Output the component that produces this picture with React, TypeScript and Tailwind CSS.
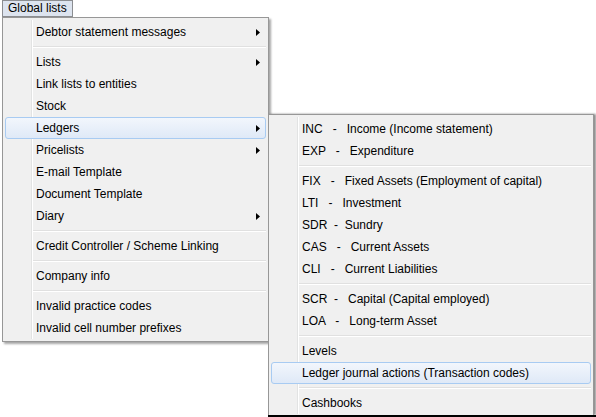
import React from "react";

type Entry = { label?: string; sub?: boolean; active?: boolean; sep?: boolean };

const mainItems: Entry[] = [
  { label: "Debtor statement messages", sub: true },
  { sep: true },
  { label: "Lists", sub: true },
  { label: "Link lists to entities" },
  { label: "Stock" },
  { label: "Ledgers", sub: true, active: true },
  { label: "Pricelists", sub: true },
  { label: "E-mail Template" },
  { label: "Document Template" },
  { label: "Diary", sub: true },
  { sep: true },
  { label: "Credit Controller / Scheme Linking" },
  { sep: true },
  { label: "Company info" },
  { sep: true },
  { label: "Invalid practice codes" },
  { label: "Invalid cell number prefixes" },
];

const ledgerItems: Entry[] = [
  { label: "INC   -   Income (Income statement)" },
  { label: "EXP   -   Expenditure" },
  { sep: true },
  { label: "FIX   -   Fixed Assets (Employment of capital)" },
  { label: "LTI   -   Investment" },
  { label: "SDR  -  Sundry" },
  { label: "CAS   -   Current Assets" },
  { label: "CLI   -   Current Liabilities" },
  { sep: true },
  { label: "SCR  -   Capital (Capital employed)" },
  { label: "LOA   -   Long-term Asset" },
  { sep: true },
  { label: "Levels" },
  { label: "Ledger journal actions (Transaction codes)", active: true },
  { sep: true },
  { label: "Cashbooks" },
];

function Arrow() {
  return (
    <svg width="4" height="7" viewBox="0 0 4 7" className="mr-[5px]">
      <polygon points="0,0 4,3.5 0,7" fill="#000" />
    </svg>
  );
}

function MenuList({ items }: { items: Entry[] }) {
  return (
    <div className="relative px-[2px] pt-[3px] pb-[2px]">
      {/* icon gutter */}
      <div className="absolute left-[28px] top-[2px] bottom-[2px] w-[2px] border-l border-[#e2e3e3] border-r border-r-white" />
      {items.map((it, i) =>
        it.sep ? (
          <div key={i} className="relative h-[8px] ml-[28px] flex flex-col justify-center">
            <div className="h-px bg-[#e0e0e0]" />
            <div className="h-px bg-white" />
          </div>
        ) : (
          <div
            key={i}
            className={`relative h-[22px] flex items-center justify-between rounded-[3px] border pl-[30px] ${
              it.active
                ? "border-[#a8cbf2] bg-gradient-to-b from-[#f2f6fc] to-[#dfe9f7]"
                : "border-transparent"
            }`}
          >
            <span className="whitespace-pre leading-none">{it.label}</span>
            {it.sub && <Arrow />}
          </div>
        )
      )}
    </div>
  );
}

export default function App() {
  return (
    <div className="relative w-[596px] h-[417px] bg-white overflow-hidden text-[12px] text-black font-['Liberation_Sans',Arial,sans-serif]">
      {/* menu bar */}
      <div className="flex h-[17px]">
        <div className="ml-[2px] h-[17px] px-[5px] border border-[#8b8d91] bg-[#dde4ef] leading-[15px]">
          Global lists
        </div>
      </div>

      {/* main dropdown */}
      <div className="absolute left-[2px] top-[17px] w-[267px] bg-[#f0f0f0] border border-[#979797] shadow-[2px_2px_2px_rgba(0,0,0,0.35)]">
        <MenuList items={mainItems} />
      </div>

      {/* ledgers submenu */}
      <div className="absolute left-[268px] top-[114px] w-[326px] h-[301px] bg-[#f0f0f0] border border-[#979797] border-b-0 shadow-[2px_0_2px_rgba(0,0,0,0.45)]">
        <MenuList items={ledgerItems} />
      </div>
      <div className="absolute left-[268px] right-0 bottom-0 h-[2px] bg-black" />
    </div>
  );
}
